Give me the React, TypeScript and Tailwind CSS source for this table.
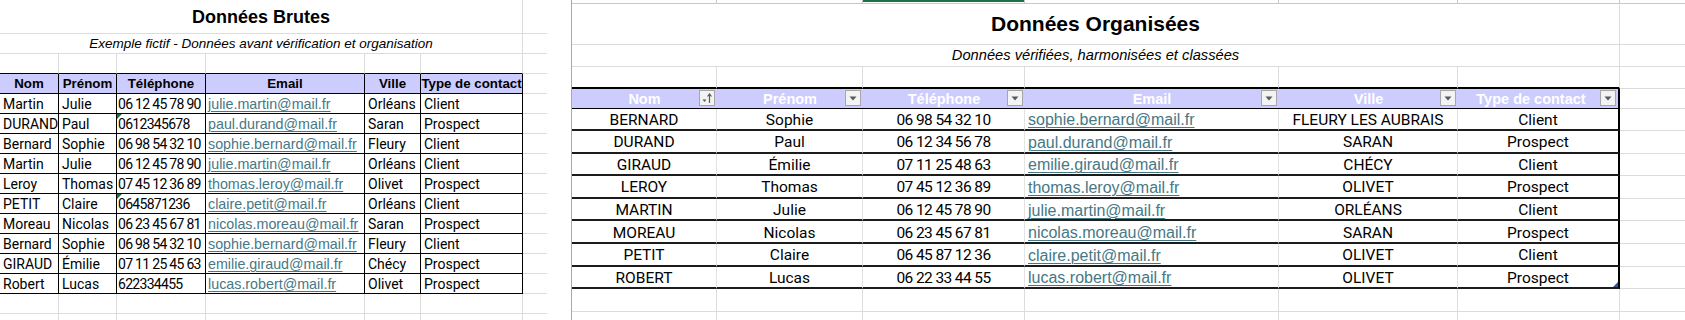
import React from "react";

const LW = ["w-[59px]", "w-[58px]", "w-[89px]", "w-[159px]", "w-[56px]", "w-[102px]"];
const LEFT_HEAD = ["Nom", "Prénom", "Téléphone", "Email", "Ville", "Type de contact"];
const LEFT_ROWS: string[][] = [
  ["Martin", "Julie", "06 12 45 78 90", "julie.martin@mail.fr", "Orléans", "Client"],
  ["DURAND", "Paul", "0612345678", "paul.durand@mail.fr", "Saran", "Prospect"],
  ["Bernard", "Sophie", "06 98 54 32 10", "sophie.bernard@mail.fr", "Fleury", "Client"],
  ["Martin", "Julie", "06 12 45 78 90", "julie.martin@mail.fr", "Orléans", "Client"],
  ["Leroy", "Thomas", "07 45 12 36 89", "thomas.leroy@mail.fr", "Olivet", "Prospect"],
  ["PETIT", "Claire", "0645871236", "claire.petit@mail.fr", "Orléans", "Client"],
  ["Moreau", "Nicolas", "06 23 45 67 81", "nicolas.moreau@mail.fr", "Saran", "Prospect"],
  ["Bernard", "Sophie", "06 98 54 32 10", "sophie.bernard@mail.fr", "Fleury", "Client"],
  ["GIRAUD", "Émilie", "07 11 25 45 63", "emilie.giraud@mail.fr", "Chécy", "Prospect"],
  ["Robert", "Lucas", "622334455", "lucas.robert@mail.fr", "Olivet", "Prospect"],
];

const RW = ["w-[145px]", "w-[146px]", "w-[162px]", "w-[254px]", "w-[179px]", "w-[162px]"];
const RIGHT_HEAD = ["Nom", "Prénom", "Téléphone", "Email", "Ville", "Type de contact"];
const RIGHT_ROWS: string[][] = [
  ["BERNARD", "Sophie", "06 98 54 32 10", "sophie.bernard@mail.fr", "FLEURY LES AUBRAIS", "Client"],
  ["DURAND", "Paul", "06 12 34 56 78", "paul.durand@mail.fr", "SARAN", "Prospect"],
  ["GIRAUD", "Émilie", "07 11 25 48 63", "emilie.giraud@mail.fr", "CHÉCY", "Client"],
  ["LEROY", "Thomas", "07 45 12 36 89", "thomas.leroy@mail.fr", "OLIVET", "Prospect"],
  ["MARTIN", "Julie", "06 12 45 78 90", "julie.martin@mail.fr", "ORLÉANS", "Client"],
  ["MOREAU", "Nicolas", "06 23 45 67 81", "nicolas.moreau@mail.fr", "SARAN", "Prospect"],
  ["PETIT", "Claire", "06 45 87 12 36", "claire.petit@mail.fr", "OLIVET", "Client"],
  ["ROBERT", "Lucas", "06 22 33 44 55", "lucas.robert@mail.fr", "OLIVET", "Prospect"],
];

function LeftCellContent({ col, text, row }: { col: number; text: string; row: number }) {
  if (col === 3) {
    return (
      <span className="pl-[2px] text-[14.3px] text-[#467886] underline underline-offset-[2px] decoration-[1px]">
        {text}
      </span>
    );
  }
  if (col === 2) {
    return (
      <>
        {(row === 1 || row === 5) && (
          <span className="absolute left-0 top-0 w-0 h-0 border-t-[5px] border-t-[#1e7145] border-r-[5px] border-r-transparent" />
        )}
        <span className="pl-[1px] font-['Roboto',sans-serif] text-[14px] tracking-[-0.7px]">{text}</span>
      </>
    );
  }
  return <span className="pl-[3px] font-['Roboto',sans-serif] text-[14px]">{text}</span>;
}

function LeftPanel() {
  return (
    <div className="w-[547px] shrink-0 flex flex-col">
      <div className="flex h-[34px] shrink-0">
        <div className="w-[523px] border-r border-b border-[#dcdcdc] flex items-center justify-center text-[18px] font-bold text-black">
          Données Brutes
        </div>
        <div className="w-[24px] border-b border-[#dcdcdc]" />
      </div>
      <div className="flex h-[20px] shrink-0">
        <div className="w-[523px] border-r border-b border-[#dcdcdc] flex items-center justify-center text-[13.5px] italic text-black">
          Exemple fictif - Données avant vérification et organisation
        </div>
        <div className="w-[24px] border-b border-[#dcdcdc]" />
      </div>
      <div className="flex h-[20px] shrink-0">
        {LW.map((w, i) => (
          <div key={i} className={`${w} border-r border-r-[#dcdcdc] border-b border-b-black`} />
        ))}
        <div className="w-[24px] border-b border-[#dcdcdc]" />
      </div>
      <div className="flex h-[20px] shrink-0">
        {LW.map((w, i) => (
          <div
            key={i}
            className={`${w} bg-[#ccccff] border-r border-b border-black flex items-center justify-center pt-[1px] text-[13.3px] font-bold text-black whitespace-nowrap overflow-hidden`}
          >
            {LEFT_HEAD[i]}
          </div>
        ))}
        <div className="w-[24px] border-b border-[#dcdcdc]" />
      </div>
      {LEFT_ROWS.map((r, ri) => (
        <div key={ri} className="flex h-[20px] shrink-0">
          {LW.map((w, i) => (
            <div
              key={i}
              className={`${w} relative border-r border-b border-black flex items-center pt-[1px] text-black whitespace-nowrap overflow-hidden`}
            >
              <LeftCellContent col={i} text={r[i]} row={ri} />
            </div>
          ))}
          <div className="w-[24px] border-b border-[#dcdcdc]" />
        </div>
      ))}
      {[0, 1].map((k) => (
        <div key={k} className="flex h-[20px] shrink-0">
          {LW.map((w, i) => (
            <div key={i} className={`${w} border-r border-b border-[#dcdcdc]`} />
          ))}
          <div className="w-[24px] border-b border-[#dcdcdc]" />
        </div>
      ))}
    </div>
  );
}

function FilterButton({ sort }: { sort?: boolean }) {
  return (
    <span className="absolute right-[2px] top-1/2 -translate-y-1/2 w-[16px] h-[16px] border border-[#a6a6a6] bg-[#f3f3f3] flex items-center justify-center">
      {sort ? (
        <svg width="14" height="14" viewBox="0 0 14 14">
          <path d="M2.5 8.5 L6.5 8.5 L4.5 11 Z" fill="#595959" />
          <path d="M9.5 12 L9.5 3.5" stroke="#595959" strokeWidth="1.2" />
          <path d="M7.5 5.5 L9.5 3 L11.5 5.5" stroke="#595959" strokeWidth="1.2" fill="none" />
        </svg>
      ) : (
        <svg width="14" height="14" viewBox="0 0 14 14">
          <path d="M3.5 5.5 L10.5 5.5 L7 9.5 Z" fill="#595959" />
        </svg>
      )}
    </span>
  );
}

function RightPanel() {
  return (
    <div className="flex-1 flex flex-col border-l border-[#a8a8a8]">
      <div className="flex h-[4px] shrink-0">
        {RW.map((w, i) => (
          <div key={i} className={`${w} border-r border-b border-[#c8c8c8] flex flex-col`}>
            {i === 2 && <div className="h-[2px] bg-[#1e7145]" />}
          </div>
        ))}
        <div className="flex-1 border-b border-[#c8c8c8]" />
      </div>
      <div className="flex h-[40.5px] shrink-0">
        <div className="w-[1048px] border-r border-b border-[#dcdcdc] flex items-center justify-center text-[21px] font-bold text-black">
          Données Organisées
        </div>
        <div className="flex-1 border-b border-[#dcdcdc]" />
      </div>
      <div className="flex h-[22.5px] shrink-0">
        <div className="w-[1048px] border-r border-b border-[#dcdcdc] flex items-center justify-center text-[14.7px] italic text-black">
          Données vérifiées, harmonisées et classées
        </div>
        <div className="flex-1 border-b border-[#dcdcdc]" />
      </div>
      <div className="flex h-[21.5px] shrink-0">
        {RW.map((w, i) => (
          <div key={i} className={`${w} border-r border-r-[#dcdcdc] border-b-2 border-b-black`} />
        ))}
        <div className="flex-1 border-b border-[#dcdcdc]" />
      </div>
      <div className="flex h-[20px] shrink-0">
        {RW.map((w, i) => (
          <div
            key={i}
            className={`${w} relative bg-[#ccccff] border-b border-b-black ${i === 5 ? "border-r-2 border-r-black" : ""} flex items-center justify-center pt-[2px] text-[14.5px] font-bold text-white whitespace-nowrap`}
          >
            <span className={i === 5 ? "pr-[14px]" : ""}>{RIGHT_HEAD[i]}</span>
            <FilterButton sort={i === 0} />
          </div>
        ))}
        <div className="flex-1 border-b border-[#dcdcdc]" />
      </div>
      {RIGHT_ROWS.map((r, ri) => (
        <div key={ri} className="flex h-[22.6px] shrink-0">
          {RW.map((w, i) => (
            <div
              key={i}
              className={`${w} relative border-b-2 border-b-[#1c1c1c] ${i === 5 ? "border-r-2 border-r-black" : "border-r border-r-[#e3e3e3]"} flex items-center pt-[3px] ${i === 3 ? "justify-start" : "justify-center"} text-black whitespace-nowrap overflow-hidden`}
            >
              {i === 3 ? (
                <span className="pl-[3px] text-[16px] text-[#467886] underline underline-offset-[2px] decoration-[1px]">
                  {r[i]}
                </span>
              ) : i === 2 ? (
                <span className="font-['Roboto',sans-serif] text-[15.5px] tracking-[-0.6px]">{r[i]}</span>
              ) : (
                <span className="font-['Roboto',sans-serif] text-[15.5px]">{r[i]}</span>
              )}
              {i === 5 && ri === RIGHT_ROWS.length - 1 && (
                <span className="absolute right-0 bottom-0 w-0 h-0 border-b-[5px] border-b-[#2f5597] border-l-[5px] border-l-transparent" />
              )}
            </div>
          ))}
          <div className="flex-1 border-b border-[#dcdcdc]" />
        </div>
      ))}
      {[0, 1].map((k) => (
        <div key={k} className="flex h-[22.6px] shrink-0">
          {RW.map((w, i) => (
            <div key={i} className={`${w} border-r border-b border-[#dcdcdc]`} />
          ))}
          <div className="flex-1 border-b border-[#dcdcdc]" />
        </div>
      ))}
    </div>
  );
}

export default function App() {
  return (
    <div className="w-[1685px] h-[320px] overflow-hidden bg-white flex font-['Liberation_Sans',Arial,sans-serif] leading-none">
      <LeftPanel />
      <div className="w-[24px] shrink-0" />
      <RightPanel />
    </div>
  );
}
